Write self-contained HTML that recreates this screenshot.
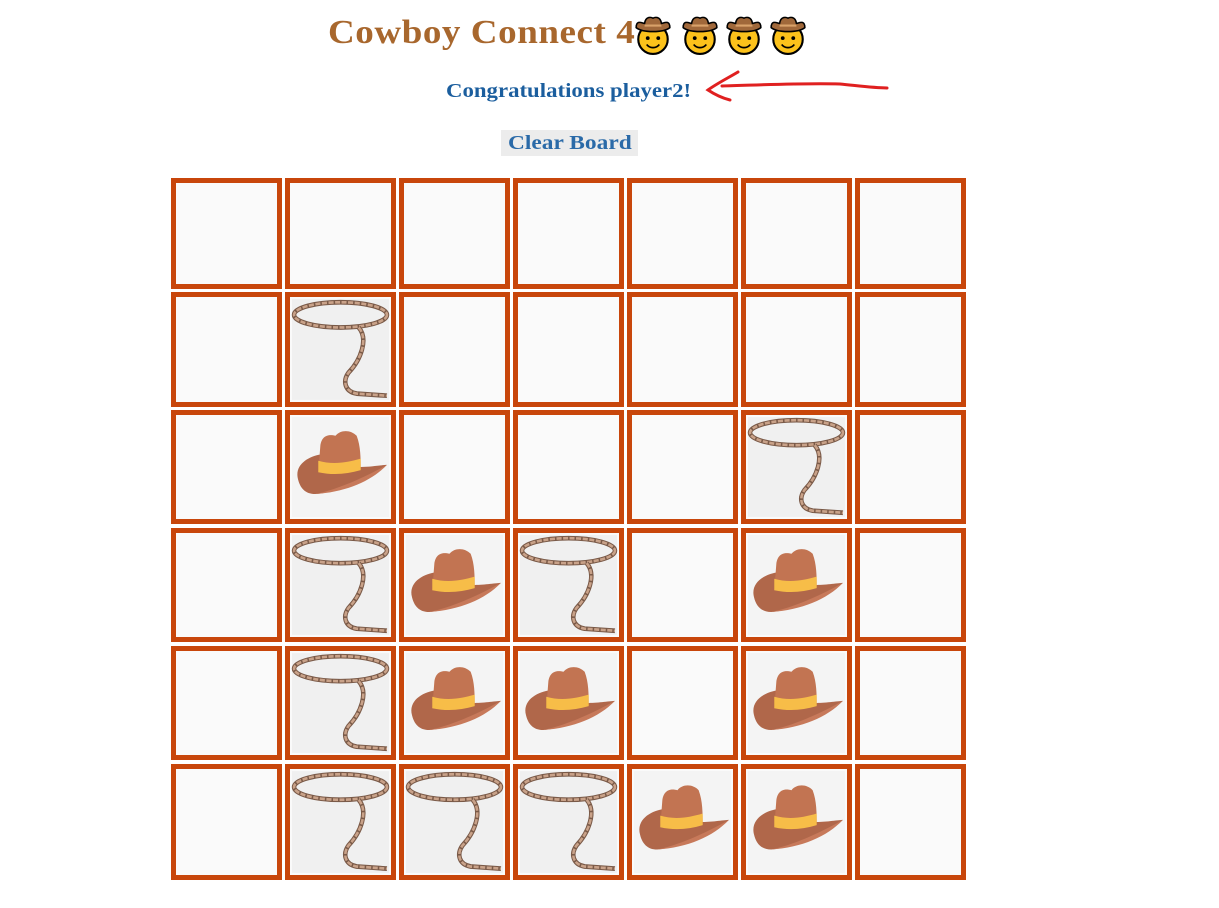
<!DOCTYPE html>
<html><head><meta charset="utf-8"><style>
body{margin:0;width:1219px;height:908px;background:#fff;position:relative;overflow:hidden;font-family:"Liberation Serif",serif}
.t{position:absolute;left:328px;top:14px;font-size:34px;font-weight:bold;color:#a8672d;letter-spacing:0.5px;transform:scaleX(1.09);transform-origin:left top}
.c{position:absolute;left:446px;top:80px;font-size:20px;font-weight:bold;color:#1b5e9e;transform:scaleX(1.14);transform-origin:left top}
.b{position:absolute;left:501px;top:130px;width:137px;height:26px;background:#ececec;font-size:20px;font-weight:bold;text-align:center;line-height:26px}
.b span{display:inline-block;color:#2a6aa8;transform:scaleX(1.17)}
.cell{position:absolute;box-sizing:border-box;border:5px solid #c8460b;background:#fafafa;overflow:hidden}
.cell svg{position:absolute;left:0;top:0;width:100%;height:100%}
.emo{position:absolute;top:15px;width:38px;height:40px}
</style></head><body>
<svg width="0" height="0" style="position:absolute">
<defs>
<symbol id="hat" viewBox="0 0 100 100">
<rect x="2" y="2" width="96" height="96" fill="#f4f4f4"/>
<path d="M8 62 C4 48 18 40 30 38 L70 50 C80 50 92 48 96 48 C80 62 50 74 25 76 C15 76 10 70 8 62Z" fill="#b0674a"/>
<path d="M28 55 L30 30 C31 20 38 18 45 20 C50 14 60 14 66 20 C70 30 70 42 70 52 C55 56 40 56 28 55Z" fill="#c27452"/>
<path d="M28 44 C42 48 56 46 70 42 L70 53 C56 57 42 58 28 55Z" fill="#f7bd48"/>
<path d="M25 76 C45 72 70 62 96 48 C80 64 55 74 25 76Z" fill="#c7795a"/>
</symbol>
<symbol id="las" viewBox="0 0 100 100">
<rect x="2" y="2" width="96" height="96" fill="#f0f0f0"/>
<ellipse cx="50" cy="17" rx="46" ry="12" fill="none" stroke="#7a5a48" stroke-width="4.5"/>
<ellipse cx="50" cy="17" rx="46" ry="12" fill="none" stroke="#c9a289" stroke-width="2.5" stroke-dasharray="5 1.5"/>
<path d="M68 29 C78 40 70 60 58 72 C52 80 54 90 66 92 L96 94" fill="none" stroke="#7a5a48" stroke-width="4.5"/>
<path d="M68 29 C78 40 70 60 58 72 C52 80 54 90 66 92 L96 94" fill="none" stroke="#c9a289" stroke-width="2.5" stroke-dasharray="5 1.5"/>
</symbol>
<symbol id="cb" viewBox="0 0 36 38">
<circle cx="18" cy="23" r="14" fill="#fcc21b" stroke="#000" stroke-width="2"/>
<path d="M2 12 C2 4 8 8 10 8 C11 1 16 2 18 3 C20 2 25 1 26 8 C28 8 34 4 34 12 C28 17 8 17 2 12Z" fill="#a0683a" stroke="#000" stroke-width="1.5"/>
<path d="M10 10 L26 10" stroke="#d9a26a" stroke-width="2"/>
<circle cx="13" cy="22" r="1.8" fill="#000"/><circle cx="23" cy="22" r="1.8" fill="#000"/>
<path d="M12 28 C15 32 21 32 24 28" fill="none" stroke="#000" stroke-width="1.6"/>
</symbol>
</defs></svg>
<div class="t">Cowboy Connect 4</div>
<svg class="emo" style="left:634px"><use href="#cb"/></svg>
<svg class="emo" style="left:681px"><use href="#cb"/></svg>
<svg class="emo" style="left:725px"><use href="#cb"/></svg>
<svg class="emo" style="left:769px"><use href="#cb"/></svg>
<div class="c">Congratulations player2!</div>
<svg style="position:absolute;left:0;top:0" width="1219" height="200"><path d="M738 72 C728 78 716 84 708 90 C714 94 722 98 730 100 M722 86 C760 85 800 83 840 84 C860 86 875 88 887 88" fill="none" stroke="#e02020" stroke-width="3" stroke-linecap="round"/></svg>
<div class="b"><span>Clear Board</span></div>
<div id="g"></div>
<script>
var xs=[171,285,399,513,627,741,855],ys=[178,292,410,528,646,764],hs=[111,115,114,114,114,116];
var board=[".......",".L.....",".H...L.",".LHL.H.",".LHH.H.",".LLLHH."];
var h="";
for(var r=0;r<6;r++)for(var c=0;c<7;c++){var k=board[r][c];h+='<div class="cell" style="left:'+xs[c]+'px;top:'+ys[r]+'px;width:111px;height:'+hs[r]+'px">'+(k=="H"?'<svg viewBox="0 0 100 100" preserveAspectRatio="none"><use href="#hat"/></svg>':k=="L"?'<svg viewBox="0 0 100 100" preserveAspectRatio="none"><use href="#las"/></svg>':'')+'</div>';}
document.getElementById("g").innerHTML=h;
</script>
</body></html>
